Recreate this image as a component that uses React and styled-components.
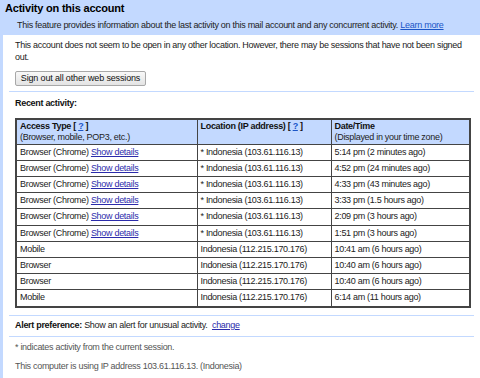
import React from "react";
import styled, { createGlobalStyle } from "styled-components";

const FONT = '"Liberation Sans", Arial, sans-serif';

const Global = createGlobalStyle`
  html, body { margin: 0; padding: 0; height: 100%; background: #c3d9ff; }
  #root { height: 100%; }
  * { box-sizing: border-box; }
`;

const Page = styled.div`
  min-height: 100vh;
  display: flex;
  flex-direction: column;
  background: #c3d9ff;
  font-family: ${FONT};
  font-size: 9px;
  letter-spacing: -0.3px;
  color: #222;
`;

const Title = styled.h1`
  margin: 0;
  padding-left: 5px;
  font-size: 11px;
  letter-spacing: -0.2px;
  line-height: 17px;
  font-weight: bold;
  color: #000;
`;

const Subtitle = styled.div`
  margin: 2px 0 4px 17px;
  line-height: 12px;
  color: #222;
  letter-spacing: -0.28px;
`;

const Panel = styled.div`
  flex: 1;
  background: #fff;
  margin-left: 3px;
  padding: 0 6px;
  display: flex;
  flex-direction: column;
`;

const Section = styled.div`
  padding: 0 6px;
  margin-top: ${(p) => p.$top || 0}px;
  line-height: ${(p) => p.$lh || 12}px;
  color: ${(p) => (p.$muted ? "#555" : "#222")};
`;

const Rule = styled.hr`
  margin: ${(p) => p.$top || 0}px 0 0 0;
  border: 0;
  height: 1px;
  background: #c3d9ff;
`;

const Button = styled.button`
  align-self: flex-start;
  margin: 8px 0 0 6px;
  height: 15px;
  width: 131px;
  padding: 0;
  font-family: ${FONT};
  font-size: 9px;
  letter-spacing: -0.15px;
  color: #111;
  background: linear-gradient(#f8f8f8, #e4e4e4);
  border: 1px solid #a8a8a8;
  border-radius: 2px;
  line-height: 13px;
  white-space: nowrap;
`;

const Link = styled.a`
  color: ${(p) => (p.$bright ? "#1a55c8" : "#2b2bab")};
  text-decoration: underline;
  cursor: pointer;
`;

const Bold = styled.b`
  font-weight: bold;
  color: #111;
`;

const Table = styled.table`
  margin: 9px 0 0 6px;
  width: 454px;
  border-collapse: collapse;
  border: 2px solid #444;
  table-layout: fixed;
`;

const Th = styled.th`
  background: #c3d9ff;
  text-align: left;
  font-weight: normal;
  vertical-align: top;
  padding: 1px 3px;
  line-height: 10.8px;
  border: 1px solid #444;
  color: #222;
  white-space: nowrap;
`;

const Td = styled.td`
  padding: 2px 3px;
  line-height: 11.2px;
  border: 1px solid #444;
  white-space: nowrap;
  color: #222;
`;

const rows = [
  ["Browser (Chrome)", true, "* Indonesia (103.61.116.13)", "5:14 pm (2 minutes ago)"],
  ["Browser (Chrome)", true, "* Indonesia (103.61.116.13)", "4:52 pm (24 minutes ago)"],
  ["Browser (Chrome)", true, "* Indonesia (103.61.116.13)", "4:33 pm (43 minutes ago)"],
  ["Browser (Chrome)", true, "* Indonesia (103.61.116.13)", "3:33 pm (1.5 hours ago)"],
  ["Browser (Chrome)", true, "* Indonesia (103.61.116.13)", "2:09 pm (3 hours ago)"],
  ["Browser (Chrome)", true, "* Indonesia (103.61.116.13)", "1:51 pm (3 hours ago)"],
  ["Mobile", false, "Indonesia (112.215.170.176)", "10:41 am (6 hours ago)"],
  ["Browser", false, "Indonesia (112.215.170.176)", "10:40 am (6 hours ago)"],
  ["Browser", false, "Indonesia (112.215.170.176)", "10:40 am (6 hours ago)"],
  ["Mobile", false, "Indonesia (112.215.170.176)", "6:14 am (11 hours ago)"],
];

export default function App() {
  return (
    <Page>
      <Global />
      <Title>Activity on this account</Title>
      <Subtitle>
        This feature provides information about the last activity on this mail account and any concurrent activity.{" "}
        <Link $bright>Learn more</Link>
      </Subtitle>
      <Panel>
        <Section $top={5} $lh={11.5}>
          This account does not seem to be open in any other location. However, there may be sessions that have not been signed out.
        </Section>
        <Button>Sign out all other web sessions</Button>
        <Rule $top={5} />
        <Section $top={5}>
          <Bold>Recent activity:</Bold>
        </Section>
        <Table>
          <colgroup>
            <col style={{ width: 181 }} />
            <col style={{ width: 134 }} />
            <col style={{ width: 139 }} />
          </colgroup>
          <thead>
            <tr>
              <Th>
                <Bold>Access Type [ <Link $bright>?</Link> ]</Bold>
                <br />
                (Browser, mobile, POP3, etc.)
              </Th>
              <Th>
                <Bold>Location (IP address) [ <Link $bright>?</Link> ]</Bold>
              </Th>
              <Th>
                <Bold>Date/Time</Bold>
                <br />
                (Displayed in your time zone)
              </Th>
            </tr>
          </thead>
          <tbody>
            {rows.map((r, i) => (
              <tr key={i}>
                <Td>
                  {r[0]}
                  {r[1] && (
                    <>
                      {" "}
                      <Link>Show details</Link>
                    </>
                  )}
                </Td>
                <Td>{r[2]}</Td>
                <Td>{r[3]}</Td>
              </tr>
            ))}
          </tbody>
        </Table>
        <Rule $top={7} />
        <Section $top={3}>
          <Bold>Alert preference:</Bold> Show an alert for unusual activity.&nbsp; <Link>change</Link>
        </Section>
        <Rule $top={5} />
        <Section $top={4} $muted>
          * indicates activity from the current session.
        </Section>
        <Section $top={7} $muted>
          This computer is using IP address 103.61.116.13. (Indonesia)
        </Section>
      </Panel>
    </Page>
  );
}
